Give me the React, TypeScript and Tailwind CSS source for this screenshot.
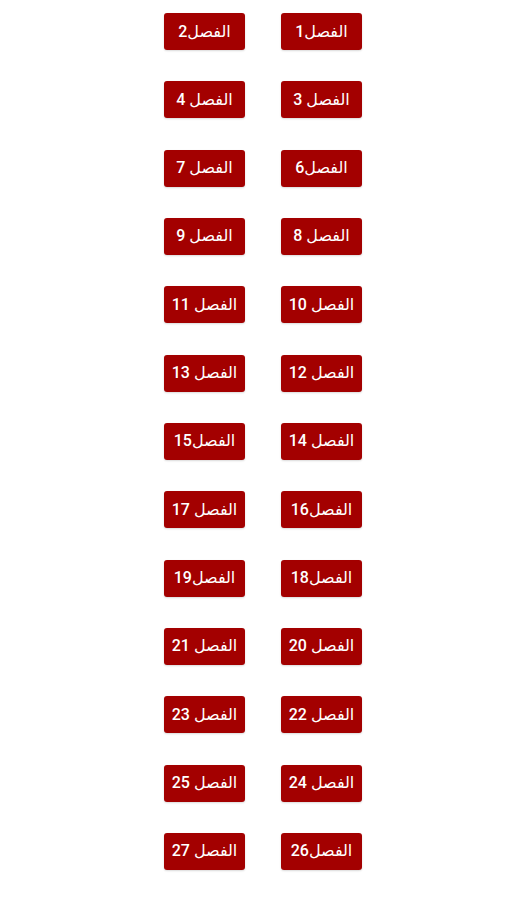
const chapters = [
  'الفصل1',
  'الفصل2',
  'الفصل 3',
  'الفصل 4',
  'الفصل6',
  'الفصل 7',
  'الفصل 8',
  'الفصل 9',
  'الفصل 10',
  'الفصل 11',
  'الفصل 12',
  'الفصل 13',
  'الفصل 14',
  'الفصل15',
  'الفصل16',
  'الفصل 17',
  'الفصل18',
  'الفصل19',
  'الفصل 20',
  'الفصل 21',
  'الفصل 22',
  'الفصل 23',
  'الفصل 24',
  'الفصل 25',
  'الفصل26',
  'الفصل 27',
]

export default function App() {
  return (
    <div className="h-[900px] w-full overflow-hidden bg-white pt-[13px]" dir="rtl">
      <div className="mx-auto grid w-[198px] grid-cols-2 gap-x-[36px] gap-y-[31.33px]">
        {chapters.map((label) => (
          <a
            key={label}
            href="#"
            className="flex h-[37px] w-[81px] items-center justify-center rounded-[3px] bg-[#a30000] text-[16px] font-medium text-white shadow-[0_1px_2px_rgba(0,0,0,0.15)] [font-family:Roboto,'DejaVu_Sans',sans-serif]"
          >
            {label}
          </a>
        ))}
      </div>
    </div>
  )
}
